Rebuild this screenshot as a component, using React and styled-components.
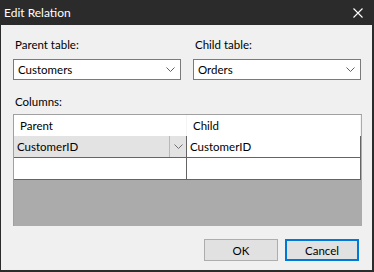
import styled, { createGlobalStyle } from "styled-components"

const Global = createGlobalStyle`
  html, body { margin: 0; padding: 0; }
  body {
    background: #2b2b2b;
    font-family: Lato, "Noto Sans", sans-serif;
    font-size: 11.5px;
    color: #000;
  }
`

const Window = styled.div`
  width: 374px;
  height: 272px;
  background: #2b2b2b;
  display: flex;
  flex-direction: column;
  box-sizing: border-box;
`

const TitleBar = styled.div`
  height: 25px;
  flex: none;
  display: flex;
  align-items: center;
  justify-content: space-between;
  padding: 0 11px 0 4px;
  color: #fff;
  font-size: 12px;
`

const Client = styled.div`
  flex: 1;
  margin: 0 2px 2px 1px;
  background: #f0f0f0;
  padding: 12px 11px 0 12px;
  display: flex;
  flex-direction: column;
`

const Row = styled.div`
  display: flex;
  gap: 12px;
`

const Field = styled.div`
  width: 168px;
  display: flex;
  flex-direction: column;
`

const Label = styled.div`
  line-height: 15px;
  padding-left: 2px;
  margin-bottom: ${p => p.gap || 7}px;
`

const Combo = styled.div`
  height: 21px;
  box-sizing: border-box;
  border: 1px solid #7a7a7a;
  background: #fff;
  display: flex;
  align-items: center;
  justify-content: space-between;
  padding: 0 5px 0 4px;
`

const Chevron = ({ color = "#606060" }) => (
  <svg width="9" height="6" viewBox="0 0 9 6">
    <polyline points="0.5,0.5 4.5,4.5 8.5,0.5" fill="none" stroke={color} strokeWidth="1" />
  </svg>
)

const Grid = styled.div`
  height: 112px;
  width: 349px;
  box-sizing: border-box;
  border-top: 1px solid #a0a0a0;
  border-left: 1px solid #a0a0a0;
  background: #ababab;
  display: flex;
  flex-direction: column;
`

const GridRow = styled.div`
  display: flex;
  height: ${p => (p.header ? 21 : 22)}px;
  width: 347px;
  background: #fff;
  box-sizing: border-box;
  border-bottom: ${p => (p.header ? "none" : "1px solid #646464")};
`

const Cell = styled.div`
  width: ${p => p.w}px;
  box-sizing: border-box;
  display: flex;
  align-items: center;
  padding-left: ${p => p.pad || 3}px;
  border-right: 1px solid ${p => (p.header ? "#f4f4f4" : "#646464")};
  background: ${p => (p.active ? "#e3e3e3" : "#fff")};
`

const CellText = styled.span`
  flex: 1;
`

const DropBtn = styled.div`
  width: 16px;
  align-self: stretch;
  border-left: 1px solid #b8b8b8;
  display: flex;
  align-items: center;
  justify-content: center;
`

const Footer = styled.div`
  display: flex;
  justify-content: flex-end;
  gap: 7px;
  margin-top: 13px;
  padding-right: 2px;
`

const Button = styled.div`
  width: 74px;
  height: 22px;
  box-sizing: border-box;
  background: #e1e1e1;
  border: ${p => (p.primary ? "2px solid #0078d7" : "1px solid #adadad")};
  display: flex;
  align-items: center;
  justify-content: center;
`

const App = () => {
  return (
    <Window>
      <Global />
      <TitleBar>
        <span>Edit Relation</span>
        <svg width="10" height="10" viewBox="0 0 10 10">
          <path d="M0.5 0.5 L9.5 9.5 M9.5 0.5 L0.5 9.5" stroke="#fff" strokeWidth="1.1" />
        </svg>
      </TitleBar>
      <Client>
        <Row>
          <Field>
            <Label>Parent table:</Label>
            <Combo>Customers<Chevron /></Combo>
          </Field>
          <Field>
            <Label>Child table:</Label>
            <Combo>Orders<Chevron /></Combo>
          </Field>
        </Row>
        <Label gap={5} style={{ marginTop: 14 }}>Columns:</Label>
        <Grid>
          <GridRow header>
            <Cell header w={173} pad={6}>Parent</Cell>
            <Cell header w={174} pad={6}>Child</Cell>
          </GridRow>
          <GridRow>
            <Cell active w={173} pad={3}>
              <CellText>CustomerID</CellText>
              <DropBtn><Chevron color="#707070" /></DropBtn>
            </Cell>
            <Cell w={174} pad={3}>CustomerID</Cell>
          </GridRow>
          <GridRow>
            <Cell w={173} />
            <Cell w={174} />
          </GridRow>
        </Grid>
        <Footer>
          <Button>OK</Button>
          <Button primary>Cancel</Button>
        </Footer>
      </Client>
    </Window>
  )
}

export default App
